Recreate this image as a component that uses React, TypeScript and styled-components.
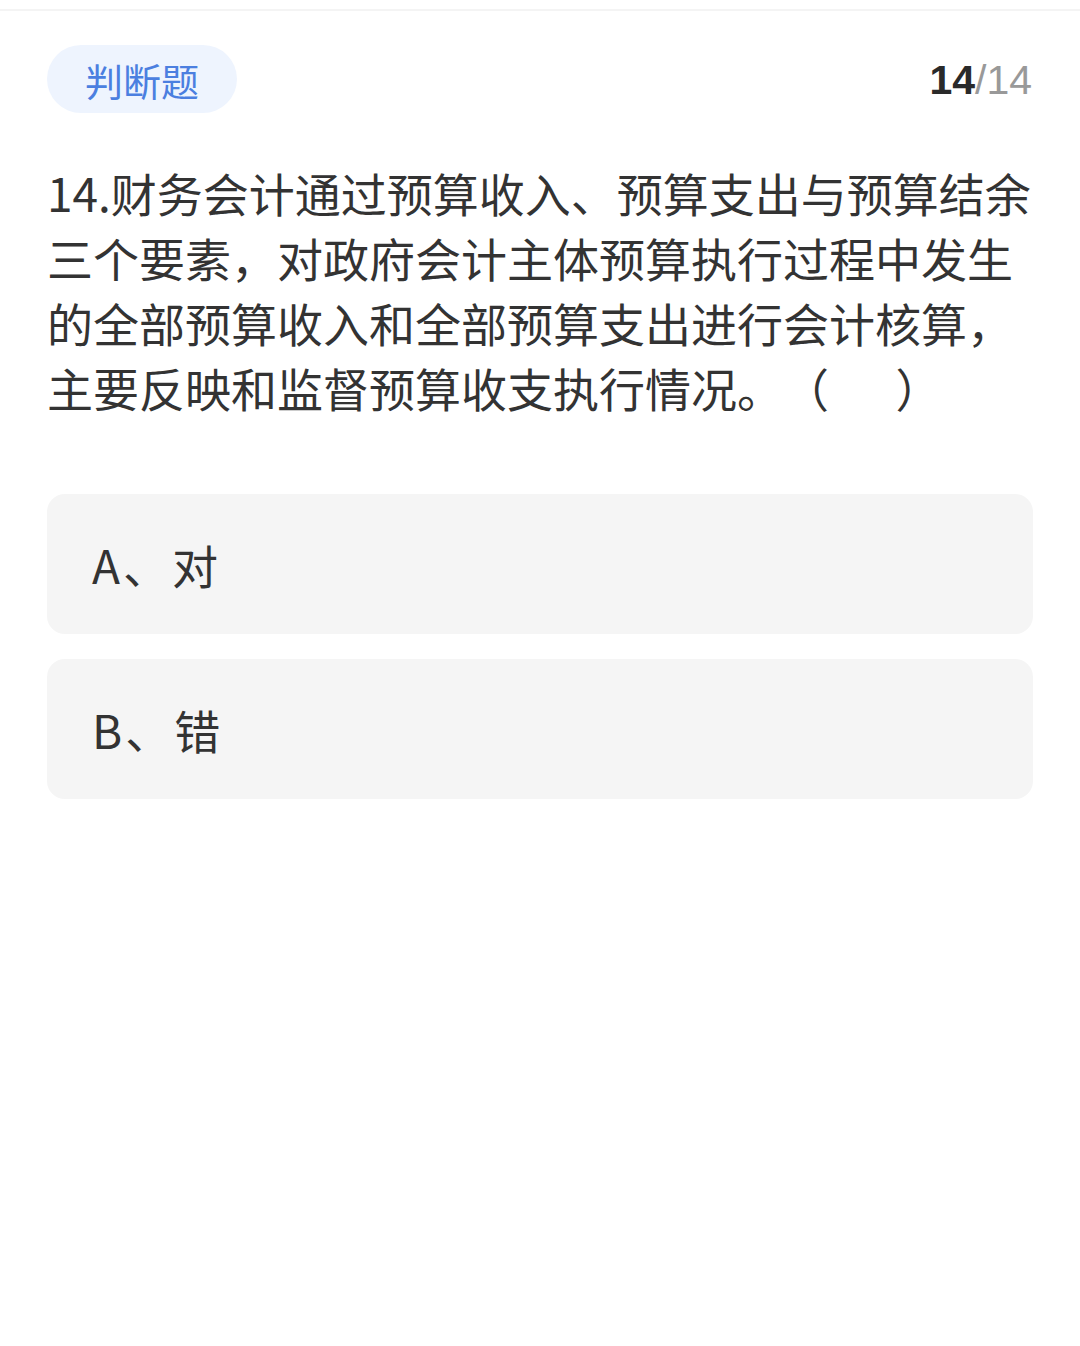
import React from "react";
import styled, { createGlobalStyle } from "styled-components";

const Global = createGlobalStyle`
  html, body { margin: 0; padding: 0; background: #ffffff; }
  body {
    font-family: "Noto Sans CJK SC", "Noto Sans", sans-serif;
    text-spacing-trim: space-all;
  }
`;

const Page = styled.div`
  width: 1080px;
  min-height: 1346px;
  background: #ffffff;
  padding-top: 9px;
  box-sizing: border-box;
`;

const TopRule = styled.div`
  height: 2px;
  background: #f4f4f4;
`;

const Content = styled.div`
  padding: 34px 47px 0 47px;
`;

const Header = styled.div`
  display: flex;
  align-items: center;
  justify-content: space-between;
`;

const Tag = styled.div`
  height: 68px;
  width: 190px;
  border-radius: 34px;
  background: #eef4fe;
  color: #4b7fe0;
  font-size: 38px;
  display: flex;
  align-items: center;
  justify-content: center;
`;

const Counter = styled.div`
  font-family: "Liberation Sans", "Noto Sans", sans-serif;
  font-size: 41px;
  line-height: 1;
  margin-right: 1px;
  margin-top: 2px;
`;

const Current = styled.span`
  color: #2a2a2a;
  font-weight: 700;
`;

const Total = styled.span`
  color: #999999;
`;

const Question = styled.div`
  margin-top: 47px;
  font-size: 46px;
  line-height: 65px;
  color: #333333;
`;

const Options = styled.div`
  margin-top: 74px;
  display: flex;
  flex-direction: column;
  gap: 25px;
`;

const Option = styled.div`
  height: 140px;
  border-radius: 18px;
  background: #f5f5f5;
  display: flex;
  align-items: center;
  padding-left: 45px;
  font-size: 46px;
  letter-spacing: 3px;
  color: #333333;
`;

export default function App() {
  return (
    <Page>
      <Global />
      <TopRule />
      <Content>
        <Header>
          <Tag>判断题</Tag>
          <Counter>
            <Current>14</Current>
            <Total>/14</Total>
          </Counter>
        </Header>
        <Question>
          {"14.财务会计通过预算收入、预算支出与预算结余三个要素，对政府会计主体预算执行过程中发生的全部预算收入和全部预算支出进行会计核算，主要反映和监督预算收支执行情况。（　\u00a0\u00a0）"}
        </Question>
        <Options>
          <Option>A、对</Option>
          <Option>B、错</Option>
        </Options>
      </Content>
    </Page>
  );
}
